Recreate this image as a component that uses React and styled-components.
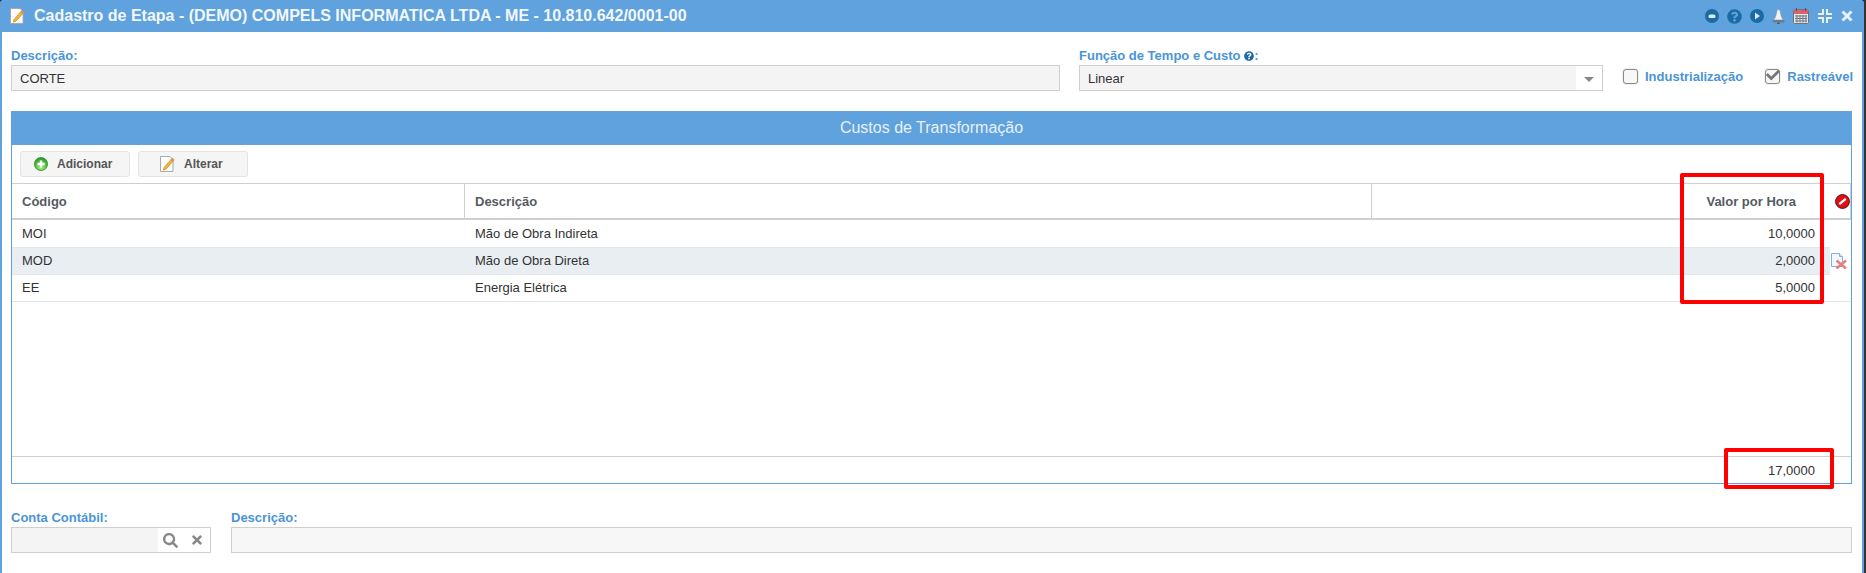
import React from 'react';
import styled, { createGlobalStyle } from 'styled-components';
import { FaCheck, FaQuestionCircle, FaSearch, FaTimes } from 'react-icons/fa';

const Global = createGlobalStyle`
  html, body { margin: 0; padding: 0; background: #333; }
  body { font-family: "Liberation Sans", Arial, sans-serif; font-size: 13px; color: #333; }
  * { box-sizing: border-box; }
`;

const Stage = styled.div`
  position: relative;
  width: 1866px;
  height: 573px;
  overflow: hidden;
  background: #333;
`;

const Window = styled.div`
  width: 1864px;
  height: 573px;
  background: #fff;
  border-right: 2px solid #5fa2dd;
  border-left: 2px solid #5fa2dd;
  border-radius: 4px 4px 0 0;
  display: flex;
  flex-direction: column;
`;

const TitleBar = styled.header`
  height: 32px;
  margin: 0 -2px;
  background: #5fa2dd;
  border-radius: 4px 4px 0 0;
  display: flex;
  align-items: center;
  padding: 0 11px 0 10px;
  color: #fff;
  flex: none;
`;

const Title = styled.h1`
  margin: 0 0 0 8px;
  font-size: 16px;
  font-weight: 700;
  color: #f2f7fc;
  flex: 1;
  white-space: nowrap;
`;

const TitleTools = styled.div`
  display: flex;
  align-items: center;
  gap: 8px;
`;

const Content = styled.main`
  flex: 1;
  padding: 17px 0 0 9px;
  display: flex;
  flex-direction: column;
`;

const FieldRow = styled.div`
  display: flex;
  align-items: flex-start;
`;

const Field = styled.div`
  width: ${(p) => p.$width}px;
  margin-left: ${(p) => p.$gap || 0}px;
  flex: none;
`;

const Label = styled.label`
  display: block;
  height: 14px;
  line-height: 14px;
  font-size: 13px;
  font-weight: 700;
  color: #4a95d6;
  margin-bottom: 2px;
  white-space: nowrap;
  svg { vertical-align: -1px; }
`;

const Input = styled.div`
  height: 26px;
  border: 1px solid #cfcfcf;
  background: ${(p) => p.$bg || '#f4f4f4'};
  display: flex;
  align-items: center;
  padding-left: 8px;
  font-size: 13px;
  color: #333;
`;

const SelectArrow = styled.div`
  margin-left: auto;
  width: 26px;
  align-self: stretch;
  background: #fff;
  display: flex;
  align-items: center;
  justify-content: center;
  &::before {
    content: '';
    border-left: 5px solid transparent;
    border-right: 5px solid transparent;
    border-top: 5px solid #888;
    margin-top: 2px;
  }
`;

const CheckWrap = styled.div`
  display: flex;
  align-items: center;
  gap: 7px;
  margin-left: ${(p) => p.$gap}px;
  margin-top: 14px;
  height: 26px;
  font-size: 13px;
  font-weight: 700;
  color: #4a95d6;
  white-space: nowrap;
`;

const CheckBox = styled.span`
  width: 15px;
  height: 15px;
  border: 1.5px solid #8a8a8a;
  border-radius: 3px;
  background: #f7f7f7;
  box-shadow: 0 0 0 1px #f1f1f1;
  position: relative;
  display: inline-block;
  svg { position: absolute; left: 0; top: -2px; color: #777; }
`;

const Panel = styled.section`
  margin-top: 20px;
  height: 373px;
  width: 1841px;
  border: 1px solid #5fa2dd;
  border-top: 0;
  display: flex;
  flex-direction: column;
`;

const PanelHead = styled.div`
  height: 34px;
  margin: 0 -1px;
  background: #5fa2dd;
  color: #e8f1fa;
  font-size: 16px;
  display: flex;
  align-items: center;
  justify-content: center;
  flex: none;
`;

const Toolbar = styled.div`
  height: 38px;
  padding: 6px 0 0 8px;
  display: flex;
  gap: 8px;
  flex: none;
`;

const ToolButton = styled.button`
  width: 110px;
  height: 26px;
  background: #f5f5f5;
  border: 1px solid #e3e3e3;
  border-radius: 3px;
  display: flex;
  align-items: center;
  padding: 0 0 0 ${(p) => p.$pad}px;
  gap: ${(p) => p.$gap}px;
  font-family: inherit;
  font-size: 12px;
  font-weight: 700;
  color: #555;
`;

const Row = styled.div`
  display: grid;
  grid-template-columns: 453px 907px 458px 21px;
  flex: none;
`;

const HeadRow = styled(Row)`
  height: 37px;
  margin-bottom: 1px;
  border-top: 1px solid #cfcfcf;
  border-bottom: 2px solid #cfcfcf;
  font-weight: 700;
  color: #555b63;
`;

const HeadCell = styled.div`
  display: flex;
  align-items: center;
  padding: 0 ${(p) => (p.$right ? '34px' : '10px')} 0 10px;
  justify-content: ${(p) => (p.$right ? 'flex-end' : 'flex-start')};
  border-right: ${(p) => (p.$noLine ? '0' : '1px solid #cfcfcf')};
`;

const IconHeadCell = styled.div`
  display: flex;
  align-items: center;
  justify-content: flex-end;
  border-right: 1px solid #cfcfcf;
`;

const BodyRow = styled(Row)`
  height: 27px;
  border-bottom: 1px solid #e2e6ea;
  background: ${(p) => (p.$active ? '#e9eef2' : '#fff')};
`;

const Cell = styled.div`
  display: flex;
  align-items: center;
  padding: 0 ${(p) => (p.$right ? '15px' : '10px')} 2px 10px;
  justify-content: ${(p) => (p.$right ? 'flex-end' : 'flex-start')};
`;

const RowAction = styled.div`
  background: #fff;
  display: flex;
  align-items: center;
  padding: 0 0 2px 1px;
  margin-bottom: ${(p) => (p.$last ? '0' : '-1px')};
`;

const Spacer = styled.div`
  flex: 1;
`;

const Totals = styled.div`
  height: 27px;
  border-top: 1px solid #cfcfcf;
  display: flex;
  align-items: center;
  justify-content: flex-end;
  padding-right: 36px;
  flex: none;
`;

const BottomRow = styled(FieldRow)`
  margin-top: 27px;
`;

const LookupTools = styled.div`
  margin-left: auto;
  width: 52px;
  align-self: stretch;
  background: #fff;
  display: flex;
  align-items: center;
  gap: 12px;
  padding-left: 5px;
  color: #888;
`;

const Highlight = styled.div`
  position: absolute;
  left: ${(p) => p.$x}px;
  top: ${(p) => p.$y}px;
  width: ${(p) => p.$w}px;
  height: ${(p) => p.$h}px;
  border: 4px solid #fe0000;
  border-radius: 2px;
  pointer-events: none;
`;

function EditIcon() {
  return (
    <svg width="16" height="16" viewBox="0 0 16 16">
      <path d="M.5.5h9.500l3 3v12H.5z" fill="#fff" stroke="#a9a9a9" />
      <path d="M4 11.500l6.800-7.800 2 1.700-6.800 7.800-2.700.9z" fill="#f0b840" stroke="#c98a1d" strokeWidth=".7" />
      <path d="M10.800 3.700l1.400-1.600 2 1.700-1.400 1.600z" fill="#e58a8a" stroke="#c98a1d" strokeWidth=".5" />
    </svg>
  );
}

function AddIcon() {
  return (
    <svg width="14" height="14" viewBox="0 0 14 14">
      <defs>
        <radialGradient id="addBall" cx="50%" cy="75%" r="70%">
          <stop offset="0" stopColor="#a8f07c" />
          <stop offset="1" stopColor="#229a26" />
        </radialGradient>
      </defs>
      <circle cx="7" cy="7" r="6.600" fill="url(#addBall)" stroke="#2a8a1c" strokeWidth=".7" />
      <path d="M7 3.500v7M3.500 7h7" stroke="#fff" strokeWidth="2.400" />
    </svg>
  );
}

function NoEntryIcon() {
  return (
    <svg width="15" height="15" viewBox="0 0 15 15">
      <circle cx="7.500" cy="7.500" r="6.900" fill="#e01016" stroke="#5a0a0a" />
      <path d="M4.300 10.200l6.400-5.400" stroke="#fff" strokeWidth="2.200" />
    </svg>
  );
}

function DeleteDocIcon() {
  return (
    <svg width="16" height="16" viewBox="0 0 16 16">
      <path d="M.5.5h8l3 3v10H.5z" fill="#f3f8fd" stroke="#7fb0e0" />
      <path d="M8.500.5v3h3" fill="#dfeaf6" stroke="#7fb0e0" />
      <path d="M5.500 7.500l9.500 8M15 7.500l-9.500 8" stroke="#e58080" strokeWidth="2.600" />
    </svg>
  );
}

function CalendarIcon() {
  return (
    <svg width="16" height="16" viewBox="0 0 16 16">
      <rect x=".5" y="1.500" width="15" height="14" rx="1" fill="#e8e8e8" stroke="#6b7280" />
      <rect x="1" y="2" width="14" height="4" fill="#d9606c" />
      <path d="M3.500 0v3M12.500 0v3" stroke="#555" />
      <path d="M2 8h12M2 10.500h12M2 13h12M4 7v7.500M7 7v7.500M10 7v7.500M13 7v7.500" stroke="#6f7680" strokeWidth="1" />
    </svg>
  );
}

function BellIcon() {
  return (
    <svg width="13" height="15" viewBox="0 0 13 15">
      <path d="M6.500.5c1 0 1.400.8 1.700 2 .5 2.800 1.200 6 3 8.500H1.800c1.800-2.500 2.500-5.700 3-8.500.3-1.200.7-2 1.700-2z" fill="#eef3f8" stroke="#8796a5" strokeWidth=".6" />
      <rect x=".5" y="11" width="12" height="2.500" rx="1" fill="#6f7b88" />
      <rect x="5" y="13.500" width="3" height="1.500" fill="#55606b" />
    </svg>
  );
}

function CompressIcon() {
  return (
    <svg width="16" height="16" viewBox="0 0 16 16">
      <path d="M6 1v5H1M10 1v5h5M6 15v-5H1M10 15v-5h5" fill="none" stroke="#e6f0f9" strokeWidth="2" />
    </svg>
  );
}

function CloseIcon() {
  return (
    <svg width="12" height="12" viewBox="0 0 12 12">
      <path d="M1.500 1.500l9 9M10.500 1.500l-9 9" stroke="#e6f0f9" strokeWidth="3" />
    </svg>
  );
}

function RoundIcon({ children }) {
  return (
    <svg width="14" height="14" viewBox="0 0 14 14">
      <circle cx="7" cy="7" r="7" fill="#1b6aa5" />
      {children}
    </svg>
  );
}

function App() {
  return (
    <Stage>
      <Global />
      <Window>
        <TitleBar>
          <EditIcon />
          <Title>Cadastro de Etapa - (DEMO) COMPELS INFORMATICA LTDA - ME - 10.810.642/0001-00</Title>
          <TitleTools>
            <RoundIcon><rect x="3.500" y="5.500" width="7" height="3.500" rx="1.500" fill="#dfeaf4" /></RoundIcon>
            <FaQuestionCircle size={15} color="#1b6aa5" />
            <RoundIcon><path d="M5 3.500l5 3.500-5 3.500z" fill="#dfeaf4" /></RoundIcon>
            <BellIcon />
            <CalendarIcon />
            <CompressIcon />
            <CloseIcon />
          </TitleTools>
        </TitleBar>
        <Content>
          <FieldRow>
            <Field $width={1049}>
              <Label>Descrição:</Label>
              <Input>CORTE</Input>
            </Field>
            <Field $width={524} $gap={19}>
              <Label>
                Função de Tempo e Custo <FaQuestionCircle size={10} color="#1b6aa5" />:
              </Label>
              <Input>
                Linear
                <SelectArrow />
              </Input>
            </Field>
            <CheckWrap $gap={20}>
              <CheckBox />
              Industrialização
            </CheckWrap>
            <CheckWrap $gap={22}>
              <CheckBox><FaCheck size={14} /></CheckBox>
              Rastreável
            </CheckWrap>
          </FieldRow>
          <Panel>
            <PanelHead>Custos de Transformação</PanelHead>
            <Toolbar>
              <ToolButton $pad={13} $gap={9}><AddIcon />Adicionar</ToolButton>
              <ToolButton $pad={21} $gap={8}><EditIcon />Alterar</ToolButton>
            </Toolbar>
            <HeadRow>
              <HeadCell>Código</HeadCell>
              <HeadCell>Descrição</HeadCell>
              <HeadCell $right $noLine>Valor por Hora</HeadCell>
              <IconHeadCell><NoEntryIcon /></IconHeadCell>
            </HeadRow>
            <BodyRow>
              <Cell>MOI</Cell>
              <Cell>Mão de Obra Indireta</Cell>
              <Cell $right>10,0000</Cell>
              <RowAction />
            </BodyRow>
            <BodyRow $active>
              <Cell>MOD</Cell>
              <Cell>Mão de Obra Direta</Cell>
              <Cell $right>2,0000</Cell>
              <RowAction><DeleteDocIcon /></RowAction>
            </BodyRow>
            <BodyRow>
              <Cell>EE</Cell>
              <Cell>Energia Elétrica</Cell>
              <Cell $right>5,0000</Cell>
              <RowAction $last />
            </BodyRow>
            <Spacer />
            <Totals>17,0000</Totals>
          </Panel>
          <BottomRow>
            <Field $width={200}>
              <Label>Conta Contábil:</Label>
              <Input>
                <LookupTools>
                  <FaSearch size={15} />
                  <FaTimes size={14} />
                </LookupTools>
              </Input>
            </Field>
            <Field $width={1621} $gap={20}>
              <Label>Descrição:</Label>
              <Input $bg="#f7f7f7" />
            </Field>
          </BottomRow>
        </Content>
      </Window>
      <Highlight $x={1680} $y={173} $w={144} $h={131} />
      <Highlight $x={1724} $y={448} $w={110} $h={41} />
    </Stage>
  );
}

export default App;
